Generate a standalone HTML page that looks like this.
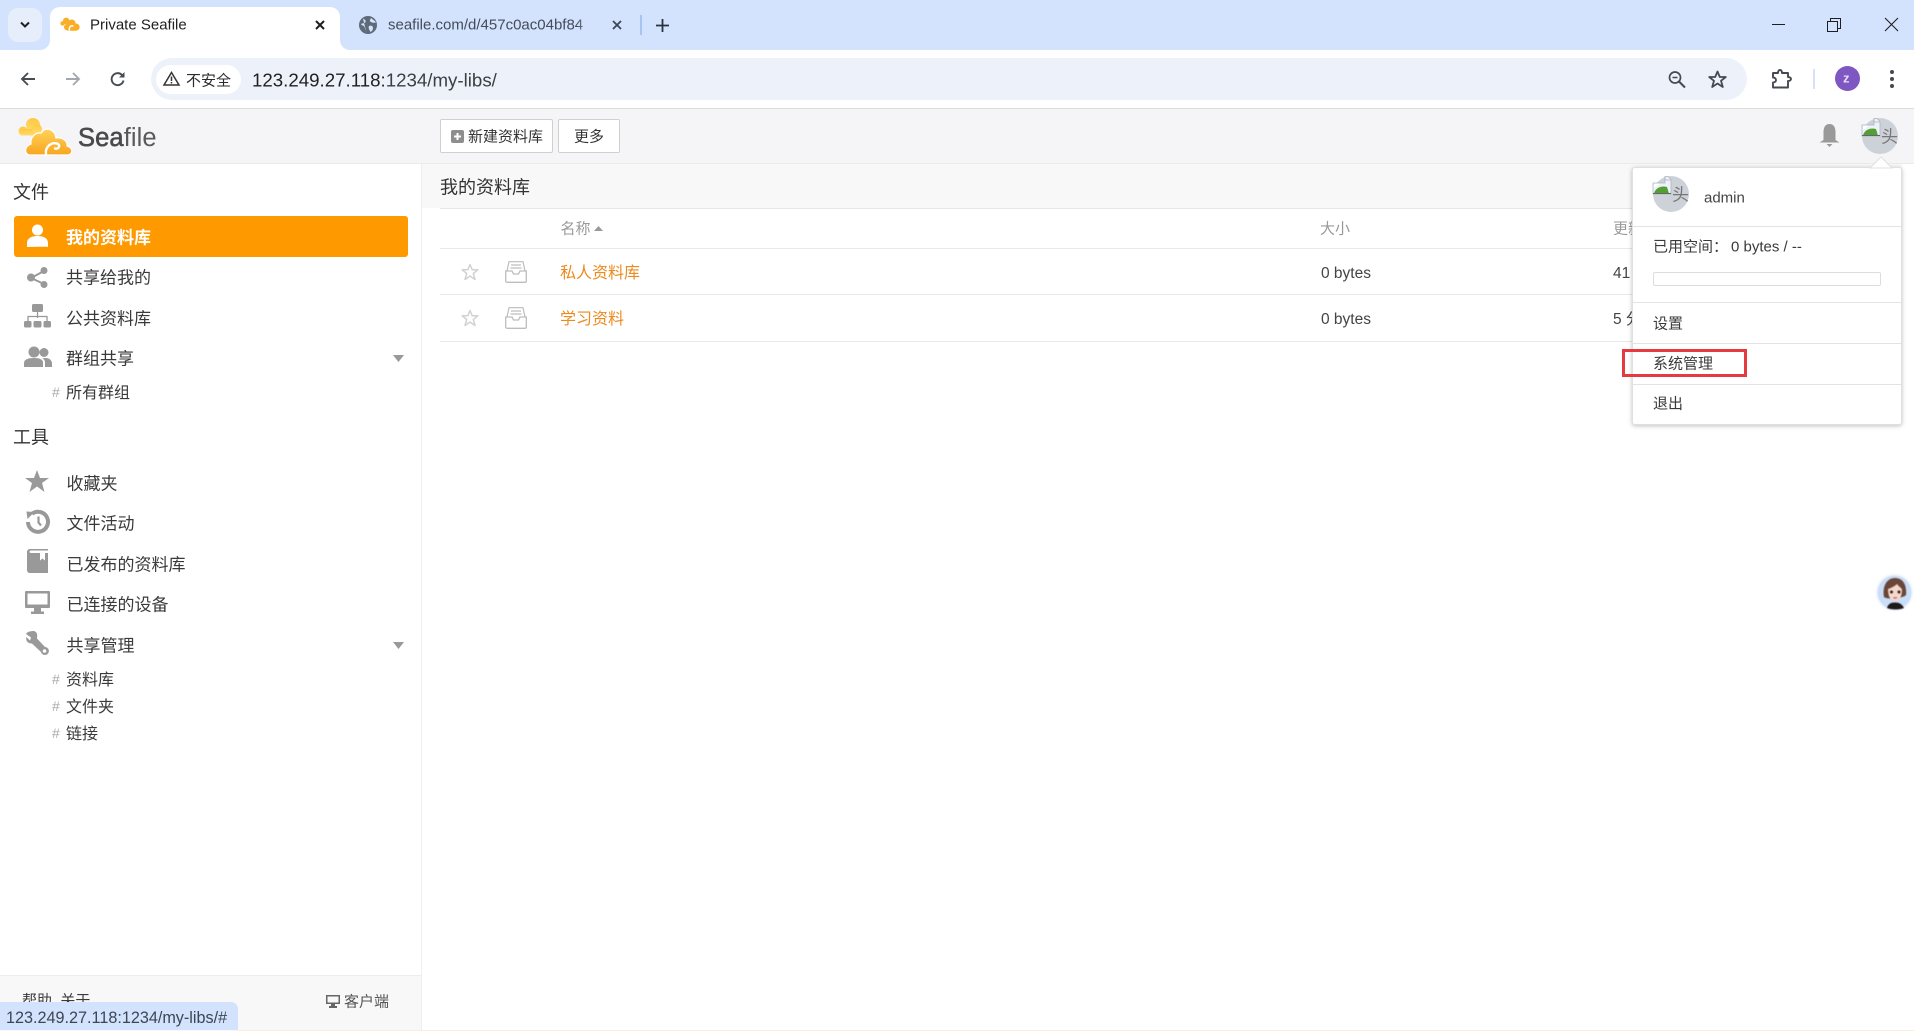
<!DOCTYPE html>
<html lang="zh">
<head>
<meta charset="utf-8">
<title>Private Seafile</title>
<style>
html,body{margin:0;padding:0;width:1914px;height:1031px;overflow:hidden;background:#fff}
body{position:relative;font-family:"Liberation Sans","Noto Sans CJK SC",sans-serif;color:#333}
.b{position:absolute}
.t{position:absolute;white-space:nowrap;transform:translateY(calc(-50% + 1.5px));line-height:1.2}
svg{position:absolute;overflow:visible}
.s17{font-size:17px;color:#3a3a3a}
.s16{font-size:16px;color:#3a3a3a}
.s15{font-size:15px;color:#3a3a3a}
.h{font-size:15px;color:#999}
.o{font-size:16px;color:#eb8a1e}
.hash{font-size:14px;color:#aaa}
.ln{position:absolute;left:440px;width:1460px;height:1px;background:#e9e9e9}
.sep{position:absolute;left:1633px;width:268px;height:1px;background:#e3e3e3}
</style>
</head>
<body>
<!-- tab strip -->
<div class="b" style="left:0;top:0;width:1914px;height:50px;background:#d3e3fd"></div>
<div class="b" style="left:8px;top:8px;width:34px;height:34px;border-radius:10px;background:#e6eefc"></div>
<svg style="left:19px;top:20px" width="12" height="10" viewBox="0 0 12 10"><path d="M2 2.500 6 6.500 10 2.500" fill="none" stroke="#1f1f1f" stroke-width="2"/></svg>
<div class="b" style="left:50px;top:7px;width:290px;height:43px;background:#fff;border-radius:10px 10px 0 0"></div>
<div class="b" style="left:40px;top:40px;width:10px;height:10px;background:#fff"><div style="width:10px;height:10px;background:#d3e3fd;border-radius:0 0 10px 0"></div></div>
<div class="b" style="left:340px;top:40px;width:10px;height:10px;background:#fff"><div style="width:10px;height:10px;background:#d3e3fd;border-radius:0 0 0 10px"></div></div>
<div class="b" style="left:0;top:50px;width:1914px;height:58px;background:#fff"></div>
<svg style="left:60px;top:16px" width="20" height="16" viewBox="0 0 55 37">
<g fill="#f9ae26"><circle cx="17" cy="10" r="9"/><circle cx="7" cy="17" r="6"/><circle cx="32" cy="17" r="11"/><circle cx="44" cy="27" r="10"/><circle cx="20" cy="27" r="9"/><rect x="18" y="25" width="28" height="12" rx="5"/></g>
<path d="M26 37C24 25 32 21 37 25" fill="none" stroke="#fff" stroke-width="4"/>
</svg>
<div class="t" style="left:90px;top:24px;font-size:15px;color:#1f1f1f">Private Seafile</div>
<svg style="left:315px;top:20px" width="10" height="10" viewBox="0 0 10 10"><path d="M1 1 9 9M9 1 1 9" stroke="#1f1f1f" stroke-width="2"/></svg>
<svg style="left:358px;top:15px" width="20" height="20" viewBox="0 0 20 20"><circle cx="10" cy="10" r="9" fill="#5f6a78"/><path d="M5 3.500c2 1 3 2 2.500 3.500S4 8 3 9c1 2 3 1.500 3.500 3S8 16 8.500 18M13 3c-1 2-2 3 0 4s4 1 5 0M11 11c2-1 4 0 4 2s-1 3-2.500 4c-1-2-2.500-4-1.500-6z" fill="#d3e3fd"/></svg>
<div class="b" style="left:388px;top:14px;width:209px;height:22px;overflow:hidden"><div class="t" style="left:0;top:10px;font-size:15px;color:#444c5a">seafile.com/d/457c0ac04bf84</div></div>
<div class="b" style="left:577px;top:14px;width:20px;height:22px;background:linear-gradient(90deg,rgba(211,227,253,0),#d3e3fd)"></div>
<svg style="left:612px;top:20px" width="10" height="10" viewBox="0 0 10 10"><path d="M1 1 9 9M9 1 1 9" stroke="#3d4654" stroke-width="1.800"/></svg>
<div class="b" style="left:640px;top:15px;width:2px;height:20px;background:#a8c4f0"></div>
<svg style="left:656px;top:19px" width="13" height="13" viewBox="0 0 13 13"><path d="M6.500 0V13M0 6.500H13" stroke="#2a3240" stroke-width="1.800"/></svg>
<!-- window controls -->
<svg style="left:1772px;top:24px" width="13" height="2"><path d="M0 .5H13" stroke="#1f1f1f" stroke-width="1"/></svg>
<svg style="left:1827px;top:18px" width="14" height="14" viewBox="0 0 14 14"><path d="M.5 3.500H10.500V13.500H.5ZM3.500 3.500V.5H13.500V10.500H10.500" fill="none" stroke="#1f1f1f"/></svg>
<svg style="left:1885px;top:18px" width="13" height="13" viewBox="0 0 13 13"><path d="M0 0 13 13M13 0 0 13" stroke="#1f1f1f" stroke-width="1.100"/></svg>
<!-- toolbar -->
<svg style="left:20px;top:71px" width="16" height="16" viewBox="0 0 16 16"><path d="M15 8H2M8 2 2 8 8 14" fill="none" stroke="#474c52" stroke-width="1.900"/></svg>
<svg style="left:65px;top:71px" width="16" height="16" viewBox="0 0 16 16"><path d="M1 8H14M8 2 14 8 8 14" fill="none" stroke="#a3a8ae" stroke-width="1.900"/></svg>
<svg style="left:110px;top:71px" width="16" height="16" viewBox="0 0 16 16"><path d="M13.500 9.500A6 6 0 1 1 12 4" fill="none" stroke="#474c52" stroke-width="1.900"/><path d="M14.500 1V6.500H9Z" fill="#474c52"/></svg>
<div class="b" style="left:151px;top:58px;width:1596px;height:42px;border-radius:21px;background:#edf2fa"></div>
<div class="b" style="left:156px;top:65px;width:85px;height:29px;border-radius:15px;background:#fff"></div>
<svg style="left:163px;top:71px" width="17" height="15" viewBox="0 0 17 15"><path d="M8.500 1.500 16 14H1Z" fill="none" stroke="#333" stroke-width="1.500"/><path d="M8.500 5.500V10M8.500 11V12.500" stroke="#333" stroke-width="1.500"/></svg>
<div class="t" style="left:186px;top:80px;font-size:15px;color:#2b2b2b">不安全</div>
<div class="t" style="left:252px;top:79px;font-size:18.7px;color:#1f1f1f">123.249.27.118:<span style="color:#3c4043">1234/my-libs/</span></div>
<svg style="left:1668px;top:70px" width="18" height="19" viewBox="0 0 18 19"><circle cx="7" cy="7.500" r="5.500" fill="none" stroke="#454a50" stroke-width="1.700"/><path d="M4.500 7.500H9.500" stroke="#454a50" stroke-width="1.500"/><path d="M11 11.500 17 17.500" stroke="#454a50" stroke-width="2"/></svg>
<svg style="left:1708px;top:70px" width="19" height="19" viewBox="0 0 19 19"><path d="M9.500 1.500 11.800 7H17.800L13 10.800 14.800 17 9.500 13.500 4.200 17 6 10.800 1.200 7H7.200Z" fill="none" stroke="#454a50" stroke-width="1.800" stroke-linejoin="round"/></svg>
<svg style="left:1771px;top:68px" width="21" height="21" viewBox="0 0 21 21"><path d="M2 5H7C7 1 11 1 11 5H17V9C21 9 21 13 17 13V19.500H2V14.500C6 14.500 6 9.500 2 9.500Z" fill="none" stroke="#454a50" stroke-width="1.900" stroke-linejoin="round"/></svg>
<div class="b" style="left:1813px;top:69px;width:2px;height:20px;background:#d7e2f4"></div>
<div class="b" style="left:1835px;top:66px;width:25px;height:25px;border-radius:50%;background:#7e57c2"></div>
<div class="t" style="left:1843px;top:77px;font-size:13px;font-weight:bold;color:#e6dcf5">z</div>
<svg style="left:1889px;top:69px" width="6" height="20" viewBox="0 0 6 20"><circle cx="3" cy="3" r="2" fill="#454a50"/><circle cx="3" cy="10" r="2" fill="#454a50"/><circle cx="3" cy="17" r="2" fill="#454a50"/></svg>
<!-- app header -->
<div class="b" style="left:0;top:108px;width:1914px;height:1px;background:#dcdcdc"></div>
<div class="b" style="left:0;top:109px;width:1914px;height:54px;background:#f5f5f7"></div>
<div class="b" style="left:0;top:163px;width:1914px;height:1px;background:#ebebeb"></div>
<svg style="left:18px;top:118px" width="55" height="37" viewBox="0 0 55 37">
<defs>
<linearGradient id="lg" x1="0" y1="0" x2="0" y2="1"><stop offset="0" stop-color="#ffd35a"/><stop offset="1" stop-color="#f9a51f"/></linearGradient>
<linearGradient id="lg2" x1="0" y1="0" x2="0" y2="1"><stop offset="0" stop-color="#ffc93f"/><stop offset="1" stop-color="#ffdb70"/></linearGradient>
</defs>
<g fill="url(#lg2)"><circle cx="15" cy="7" r="7"/><circle cx="5" cy="13" r="4.500"/><rect x="1" y="11" width="18" height="6.500" rx="3"/><circle cx="19" cy="11" r="5"/></g>
<path d="M12 37C6 37 6 28 13 26 12 19 18 14 23 15 28 8 37 11 38 20 44 19 50 23 49 28 55 29 56 37 49 37Z" fill="url(#lg)" stroke="#fff" stroke-width="1.200"/>
<path d="M28 36C27 29 33 24 39 25.500 43 27 41 31.500 37 30.500" fill="none" stroke="#fff" stroke-width="2.400" stroke-linecap="round"/>
</svg>
<div class="t" style="left:78px;top:136.500px;font-size:25.500px;color:#595959;letter-spacing:.1px"><span style="-webkit-text-stroke:.6px #4a4a4a;color:#4a4a4a">Sea</span>file</div>
<div class="b" style="left:440px;top:119px;width:111px;height:32px;background:#fff;border:1px solid #d0d0d0;border-radius:2px"></div>
<div class="b" style="left:451px;top:130px;width:13px;height:13px;background:#8e8e8e;border-radius:2px"></div>
<svg style="left:451px;top:130px" width="13" height="13"><path d="M6.500 3V10M3 6.500H10" stroke="#fff" stroke-width="2"/></svg>
<div class="t s15" style="left:468px;top:136px;color:#333">新建资料库</div>
<div class="b" style="left:558px;top:119px;width:60px;height:32px;background:#fff;border:1px solid #d0d0d0;border-radius:2px"></div>
<div class="t s15" style="left:574px;top:136px;color:#333">更多</div>
<svg style="left:1819px;top:124px" width="21" height="23" viewBox="0 0 21 23"><path d="M10.500 0C15 0 16.500 4 16.500 8V16L20.500 18.500H.5L4.500 16V8C4.500 4 6 0 10.500 0Z" fill="#999"/><path d="M7.500 20H13.500L10.500 23Z" fill="#999"/></svg>
<div class="b" style="left:1862px;top:118px;width:36px;height:36px;border-radius:50%;background:#cdd1d8;overflow:hidden"></div>
<div class="t" style="left:1881px;top:135.500px;font-size:17px;color:#777">头</div>
<svg style="left:1862px;top:118px" width="18" height="18" viewBox="0 0 18 18"><path d="M12 .5H15L18 3.500V18H0V7H12Z" fill="#eef2f8" stroke="#aab1bc" stroke-width=".7"/><path d="M12 .5V4H18" fill="none" stroke="#aab1bc" stroke-width=".7"/><path d="M1 7.500H7L1 12Z" fill="#fff"/><path d="M1 17.500C2 13 7 9 14 11L16 17.500Z" fill="#52a035"/><path d="M0 18H18V17H0Z" fill="#666"/></svg>
<!-- sidebar -->
<div class="b" style="left:421px;top:164px;width:1px;height:867px;background:#eeeeee"></div>
<div class="t" style="left:13px;top:191.500px;font-size:18px;color:#333">文件</div>
<div class="b" style="left:14px;top:216px;width:394px;height:41px;border-radius:3px;background:#ff9900"></div>
<svg style="left:27px;top:224px" width="21" height="23" viewBox="0 0 21 23"><circle cx="10.500" cy="6" r="5.500" fill="#fff"/><path d="M0 23V19C0 14 5 12 10.500 12S21 14 21 19V23C21 22.500 0 23 0 23Z" fill="#fff"/></svg>
<div class="t s17" style="left:66px;top:237px;color:#fff;font-weight:bold">我的资料库</div>

<svg style="left:27px;top:267px" width="21" height="21" viewBox="0 0 21 21"><path d="M4 11 17 4M4 11 17 17" stroke="#999" stroke-width="2"/><circle cx="4" cy="10.500" r="4" fill="#999"/><circle cx="17" cy="3.500" r="3.500" fill="#999"/><circle cx="17" cy="17.500" r="3.500" fill="#999"/></svg>
<div class="t s17" style="left:66px;top:277px">共享给我的</div>

<svg style="left:24px;top:304px" width="27" height="24" viewBox="0 0 27 24"><rect x="8" y="0" width="11" height="8" rx="1.500" fill="#999"/><path d="M13.500 8V14M4 17V12.500H23V17" fill="none" stroke="#999" stroke-width="1.300"/><rect x="0" y="17" width="7.500" height="6.500" rx="1.500" fill="#999"/><rect x="9.500" y="17" width="8" height="6.500" rx="1.500" fill="#999"/><rect x="19.500" y="17" width="7.500" height="6.500" rx="1.500" fill="#999"/></svg>
<div class="t s17" style="left:66px;top:318px">公共资料库</div>

<svg style="left:24px;top:346px" width="28" height="21" viewBox="0 0 28 21"><circle cx="10" cy="6" r="5.500" fill="#999"/><path d="M0 21V17C0 13.500 4 12 10 12S19 13.500 19 17V21Z" fill="#999"/><circle cx="20" cy="6.500" r="4.500" fill="#999"/><path d="M21 21V16.500C21 14.500 20 13 18 12.500 24 11 28 13.500 28 17.500V21Z" fill="#999"/></svg>
<div class="t s17" style="left:66px;top:358px">群组共享</div>
<svg style="left:393px;top:355px" width="11" height="7"><path d="M0 0H11L5.500 7Z" fill="#999"/></svg>
<div class="t hash" style="left:52px;top:391px">#</div>
<div class="t s16" style="left:66px;top:392px">所有群组</div>

<div class="t" style="left:13px;top:437px;font-size:18px;color:#333">工具</div>

<svg style="left:25px;top:470px" width="24" height="22" viewBox="0 0 24 22"><path d="M12 0 15 8H24L17 13 19.500 22 12 16.500 4.500 22 7 13 0 8H9Z" fill="#999"/></svg>
<div class="t s17" style="left:66.500px;top:483px">收藏夹</div>

<svg style="left:26px;top:510px" width="24" height="24" viewBox="0 0 24 24"><path d="M6 3.800A10 10 0 1 1 2 12" fill="none" stroke="#999" stroke-width="4"/><path d="M.5 1.500 8.500 2 1.500 9Z" fill="#999"/><path d="M12.500 6.500V12.500L15 15.500" fill="none" stroke="#999" stroke-width="2.200"/></svg>
<div class="t s17" style="left:66.500px;top:523px">文件活动</div>

<svg style="left:27px;top:549px" width="21" height="24" viewBox="0 0 21 24"><path d="M3 0H21V1.500H4C2 1.500 2 4 4 4H21V24H3C1.500 24 0 23 0 21V3C0 1 1.500 0 3 0Z" fill="#999"/><path d="M13 4H18V11.500L15.500 9.500 13 11.500Z" fill="#fff"/></svg>
<div class="t s17" style="left:66.500px;top:564px">已发布的资料库</div>

<svg style="left:25px;top:591px" width="25" height="23" viewBox="0 0 25 23"><path d="M1 0H24C24.600 0 25 .4 25 1V16C25 16.600 24.600 17 24 17H1C.4 17 0 16.600 0 16V1C0 .4.4 0 1 0ZM2.500 2.500V13.500H22.500V2.500Z" fill="#999" fill-rule="evenodd"/><path d="M9 17H16V20.500H19V23H6V20.500H9Z" fill="#999"/></svg>
<div class="t s17" style="left:66.500px;top:604px">已连接的设备</div>

<svg style="left:26px;top:631px" width="24" height="24" viewBox="0 0 24 24"><path d="M8 0C4 0 1 1 0 3L5 6.500 4 9.500 .5 6C-.5 9 1 12.500 6 12.500L15 21A4 4 0 1 0 19 16L11 7.500C11.500 3 11 1 8 0Z" fill="#999"/><circle cx="18.500" cy="20" r="1.800" fill="#fff"/></svg>
<div class="t s17" style="left:66.500px;top:645px">共享管理</div>
<svg style="left:393px;top:642px" width="11" height="7"><path d="M0 0H11L5.500 7Z" fill="#999"/></svg>
<div class="t hash" style="left:52px;top:678px">#</div>
<div class="t s16" style="left:66px;top:679px">资料库</div>
<div class="t hash" style="left:52px;top:705px">#</div>
<div class="t s16" style="left:66px;top:706px">文件夹</div>
<div class="t hash" style="left:52px;top:732px">#</div>
<div class="t s16" style="left:66px;top:733px">链接</div>

<div class="b" style="left:0;top:975px;width:421px;height:56px;background:#f8f8f8;border-top:1px solid #ededed;box-sizing:border-box"></div>
<div class="t s15" style="left:22px;top:999.500px">帮助&nbsp;&nbsp;关于</div>
<svg style="left:326px;top:995px" width="14" height="13" viewBox="0 0 14 13"><path d="M0 0H14V9H0ZM1.500 1.500V7.500H12.500V1.500ZM5 9H9V11H11V13H3V11H5Z" fill="#666" fill-rule="evenodd"/></svg>
<div class="t s15" style="left:344px;top:1000.500px;color:#555">客户端</div>
<div class="b" style="left:0;top:1002px;width:238px;height:28px;background:#d3e3fd;border-radius:0 7px 0 0"></div>
<div class="t" style="left:6px;top:1016.500px;font-size:16.200px;color:#3c4654">123.249.27.118:1234/my-libs/#</div>
<div class="b" style="left:238px;top:1030px;width:1676px;height:1px;background:#fbeedd"></div>

<!-- main -->
<div class="b" style="left:422px;top:164px;width:1480px;height:44px;background:#f8f8f8"></div>
<div class="t" style="left:440px;top:186.500px;font-size:18px;color:#333">我的资料库</div>
<div class="ln" style="top:208px;background:#e6e6e6"></div>
<div class="t h" style="left:560.500px;top:228px">名称</div>
<svg style="left:594px;top:226px" width="9" height="5"><path d="M0 5H9L4.500 0Z" fill="#999"/></svg>
<div class="t h" style="left:1320px;top:228px">大小</div>
<div class="t h" style="left:1613px;top:228px">更新时间</div>
<div class="ln" style="top:248px"></div>

<svg style="left:461px;top:263px" width="18" height="18" viewBox="0 0 18 18"><path d="M9 1.500 11.200 6.800H16.800L12.300 10.500 14 16.500 9 13 4 16.500 5.700 10.500 1.200 6.800H6.800Z" fill="none" stroke="#d2d2d2" stroke-width="1.500" stroke-linejoin="round"/></svg>
<svg style="left:505px;top:261px" width="22" height="22" viewBox="0 0 22 22"><path d="M2 10 4 .7H18L20 10M6 4H16M5.500 7H16.500" fill="none" stroke="#bdbdbd" stroke-width="1.200"/><path d="M.7 10H7L8.500 13H13.500L15 10H21.300V20C21.300 20.800 20.800 21.300 20 21.300H2C1.200 21.300.7 20.800.7 20Z" fill="#fff" stroke="#bdbdbd" stroke-width="1.300"/></svg>
<div class="t o" style="left:560px;top:271.500px">私人资料库</div>
<div class="t" style="left:1321px;top:272.500px;font-size:15.500px;color:#444">0 bytes</div>
<div class="t" style="left:1613px;top:272.500px;font-size:15.500px;color:#444">41 分钟前</div>
<div class="ln" style="top:294px"></div>

<svg style="left:461px;top:309px" width="18" height="18" viewBox="0 0 18 18"><path d="M9 1.500 11.200 6.800H16.800L12.300 10.500 14 16.500 9 13 4 16.500 5.700 10.500 1.200 6.800H6.800Z" fill="none" stroke="#d2d2d2" stroke-width="1.500" stroke-linejoin="round"/></svg>
<svg style="left:505px;top:307px" width="22" height="22" viewBox="0 0 22 22"><path d="M2 10 4 .7H18L20 10M6 4H16M5.500 7H16.500" fill="none" stroke="#bdbdbd" stroke-width="1.200"/><path d="M.7 10H7L8.500 13H13.500L15 10H21.300V20C21.300 20.800 20.800 21.300 20 21.300H2C1.200 21.300.7 20.800.7 20Z" fill="#fff" stroke="#bdbdbd" stroke-width="1.300"/></svg>
<div class="t o" style="left:560px;top:318px">学习资料</div>
<div class="t" style="left:1321px;top:318.500px;font-size:15.500px;color:#444">0 bytes</div>
<div class="t" style="left:1613px;top:318.500px;font-size:15.500px;color:#444">5 分钟前</div>
<div class="ln" style="top:341px"></div>

<!-- dropdown -->
<svg style="left:1870px;top:157px;z-index:3" width="22" height="11" viewBox="0 0 22 11"><path d="M0 11 11 0 22 11Z" fill="#fff" stroke="#e0e0e0"/></svg>
<div class="b" style="left:1632px;top:167px;width:268px;height:256px;background:#fff;border:1px solid #e0e0e0;border-radius:3px;box-shadow:0 1px 4px rgba(0,0,0,.25);z-index:2"></div>
<div style="position:absolute;left:0;top:0;z-index:4">
<div class="b" style="left:1653px;top:176px;width:36px;height:36px;border-radius:50%;background:#cdd1d8"></div>
<div class="t" style="left:1672px;top:193.500px;font-size:17px;color:#777">头</div>
<svg style="left:1653px;top:176px" width="18" height="18" viewBox="0 0 18 18"><path d="M12 .5H15L18 3.500V18H0V7H12Z" fill="#eef2f8" stroke="#aab1bc" stroke-width=".7"/><path d="M12 .5V4H18" fill="none" stroke="#aab1bc" stroke-width=".7"/><path d="M1 7.500H7L1 12Z" fill="#fff"/><path d="M1 17.500C2 13 7 9 14 11L16 17.500Z" fill="#52a035"/><path d="M0 18H18V17H0Z" fill="#666"/></svg>
<div class="t" style="left:1704px;top:196.500px;font-size:15px;color:#444">admin</div>
<div class="sep" style="top:226px"></div>
<div class="t s15" style="left:1653px;top:245.500px">已用空间：</div>
<div class="t" style="left:1731px;top:246px;font-size:15px;color:#3a3a3a">0 bytes / --</div>
<div class="b" style="left:1653px;top:272px;width:226px;height:12px;border:1px solid #ddd;border-radius:2px"></div>
<div class="sep" style="top:302px"></div>
<div class="t s15" style="left:1653px;top:322.500px">设置</div>
<div class="sep" style="top:343px"></div>
<div class="t s15" style="left:1653px;top:363px">系统管理</div>
<div class="sep" style="top:384px"></div>
<div class="t s15" style="left:1653px;top:403px">退出</div>
<div class="b" style="left:1622px;top:349px;width:119px;height:22px;border:3px solid #e53a40"></div>
</div>
<!-- floating avatar -->
<svg style="left:1875px;top:573px;z-index:5;filter:blur(.4px)" width="39" height="39" viewBox="0 0 39 39">
<circle cx="19.500" cy="19.500" r="19" fill="#f4f7fc"/><circle cx="19.500" cy="19.500" r="17" fill="#c9def8"/>
<path d="M9 24C7 13 12 5 20 5S32 12 31 22C29 25 12 27 9 24Z" fill="#6b4638"/>
<path d="M13 16C16 15 20 13 22 11 24 14 27 15 27 17 27 24 24 28 20 28S13 24 13 16Z" fill="#f6d7cb"/>
<circle cx="16.500" cy="19" r="1.500" fill="#2e2020"/><circle cx="24" cy="19" r="1.500" fill="#2e2020"/>
<path d="M18.500 24.500Q20 25.500 22 24.500" stroke="#c8505a" stroke-width="1.200" fill="none"/>
<path d="M12 35C13 31 16 29.500 20 29.500S27 31 29 35C25 37 16 37 12 35Z" fill="#1e1a1a"/>
</svg>
</body>
</html>
